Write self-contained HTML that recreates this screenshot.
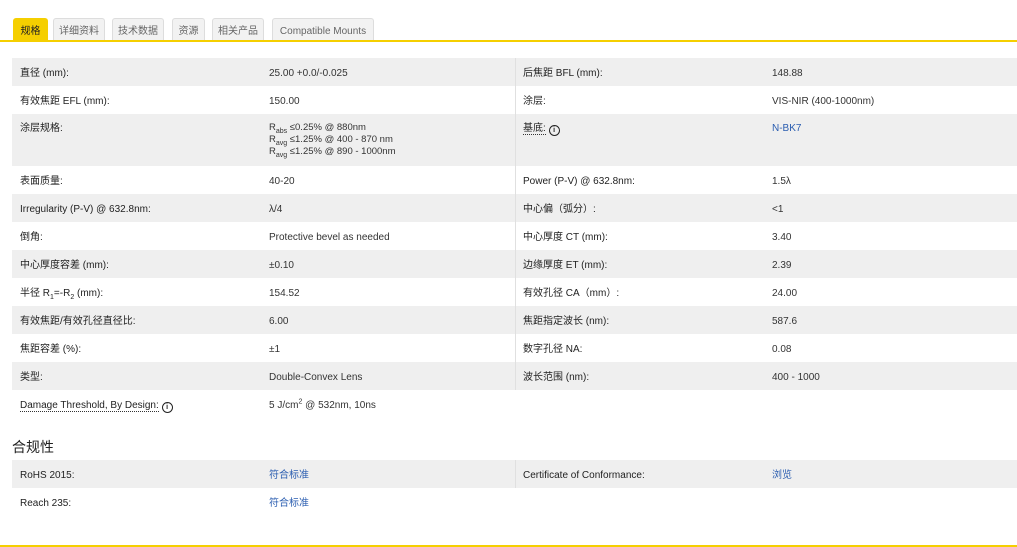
<!DOCTYPE html>
<html><head><meta charset="utf-8"><style>
body{margin:0;background:#fff;font-family:"Liberation Sans","Noto Sans CJK SC",sans-serif;font-size:10px;color:#333;width:1017px;height:547px;overflow:hidden;position:relative}
.tabs{position:absolute;left:13px;top:18px;height:23px}
.tab{position:absolute;top:0;height:23px;line-height:25px;text-align:center;background:#f2f2f2;border:1px solid #ddd;border-bottom:none;box-sizing:border-box;color:#666;border-radius:3px 3px 0 0}
.tab.a{background:#f5cf00;border-color:#f5cf00;color:#222}
.yl{position:absolute;left:0;width:1017px;height:2px;background:#f5cf00}
.t{position:absolute;left:12px;width:1005px}
.r{position:relative;height:28px;line-height:28px;white-space:nowrap}
.r.g{background:#efefef}
.r span.c{position:absolute;top:2px}
.c1{left:8px;color:#222}.c2{left:257px}.c3{left:511px;color:#222}.c4{left:760px}
.dv{position:absolute;left:503px;top:0;bottom:0;width:1px;background:#e0e0e0}
.l{color:#2a5db0}
sub,sup{font-size:7px;line-height:0}
.i{display:inline-block;width:9px;height:9px;border:1px solid #222;border-radius:50%;font-size:7px;line-height:9px;text-align:center;font-weight:bold;vertical-align:-1px}
.u{border-bottom:1px dotted #333;line-height:12px}
h3{position:absolute;left:12px;top:437px;margin:0;font-size:14px;font-weight:normal;color:#222}
</style></head><body>
<div class="tabs">
<div class="tab a" style="left:0;width:35px">规格</div>
<div class="tab" style="left:40px;width:52px">详细资料</div>
<div class="tab" style="left:99px;width:52px">技术数据</div>
<div class="tab" style="left:159px;width:33px">资源</div>
<div class="tab" style="left:199px;width:52px">相关产品</div>
<div class="tab" style="left:259px;width:102px">Compatible Mounts</div>
</div>
<div class="yl" style="top:40px"></div>
<div class="t" style="top:58px">
<div class="r g"><span class="c c1">直径 (mm):</span><span class="c c2">25.00 +0.0/-0.025</span><span class="c c3">后焦距 BFL (mm):</span><span class="c c4">148.88</span></div>
<div class="r"><span class="c c1">有效焦距 EFL (mm):</span><span class="c c2">150.00</span><span class="c c3">涂层:</span><span class="c c4">VIS-NIR (400-1000nm)</span></div>
<div class="r g" style="height:52px;line-height:12px"><span class="c c1" style="top:9px">涂层规格:</span><span class="c c2" style="top:8px;font-size:9.5px">R<sub>abs</sub> ≤0.25% @ 880nm<br>R<sub>avg</sub> ≤1.25% @ 400 - 870 nm<br>R<sub>avg</sub> ≤1.25% @ 890 - 1000nm</span><span class="c c3" style="top:9px"><span class="u">基底:</span> <span class="i">i</span></span><span class="c c4 l" style="top:9px">N-BK7</span></div>
<div class="r"><span class="c c1">表面质量:</span><span class="c c2">40-20</span><span class="c c3">Power (P-V) @ 632.8nm:</span><span class="c c4">1.5λ</span></div>
<div class="r g"><span class="c c1">Irregularity (P-V) @ 632.8nm:</span><span class="c c2">λ/4</span><span class="c c3">中心偏（弧分）:</span><span class="c c4">&lt;1</span></div>
<div class="r"><span class="c c1">倒角:</span><span class="c c2">Protective bevel as needed</span><span class="c c3">中心厚度 CT (mm):</span><span class="c c4">3.40</span></div>
<div class="r g"><span class="c c1">中心厚度容差 (mm):</span><span class="c c2">±0.10</span><span class="c c3">边缘厚度 ET (mm):</span><span class="c c4">2.39</span></div>
<div class="r"><span class="c c1">半径 R<sub>1</sub>=-R<sub>2</sub> (mm):</span><span class="c c2">154.52</span><span class="c c3">有效孔径 CA（mm）:</span><span class="c c4">24.00</span></div>
<div class="r g"><span class="c c1">有效焦距/有效孔径直径比:</span><span class="c c2">6.00</span><span class="c c3">焦距指定波长 (nm):</span><span class="c c4">587.6</span></div>
<div class="r"><span class="c c1">焦距容差 (%):</span><span class="c c2">±1</span><span class="c c3">数字孔径 NA:</span><span class="c c4">0.08</span></div>
<div class="r g"><span class="c c1">类型:</span><span class="c c2">Double-Convex Lens</span><span class="c c3">波长范围 (nm):</span><span class="c c4">400 - 1000</span></div>
<div class="r"><span class="c c1"><span class="u">Damage Threshold, By Design:</span> <span class="i">i</span></span><span class="c c2">5 J/cm<sup>2</sup> @ 532nm, 10ns</span></div>
<div class="dv" style="bottom:28px"></div>
</div>
<h3>合规性</h3>
<div class="t" style="top:460px">
<div class="r g"><span class="c c1">RoHS 2015:</span><span class="c c2 l">符合标准</span><span class="c c3">Certificate of Conformance:</span><span class="c c4 l">浏览</span><div class="dv"></div></div>
<div class="r"><span class="c c1">Reach 235:</span><span class="c c2 l">符合标准</span></div>
</div>
<div class="yl" style="top:545px"></div>
</body></html>
